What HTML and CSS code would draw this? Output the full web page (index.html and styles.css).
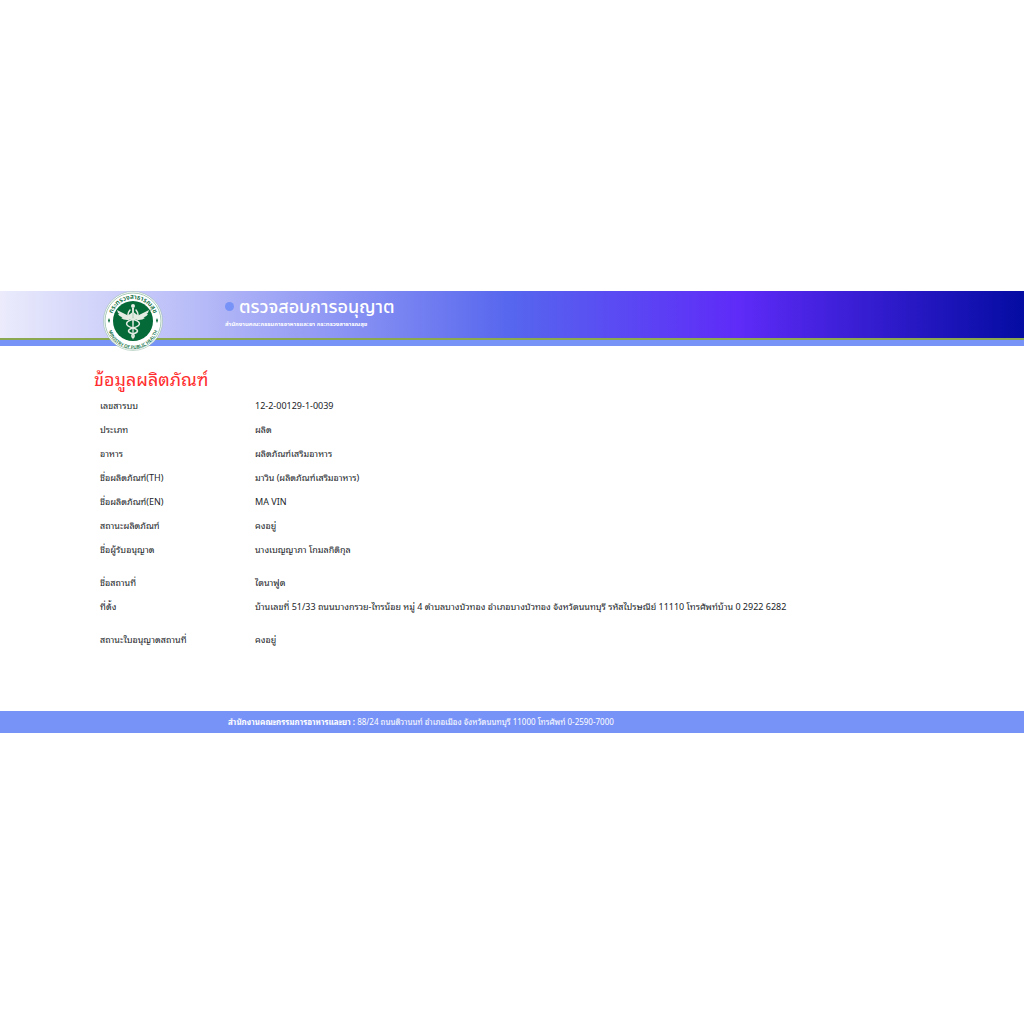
FILE: index.html
```html
<!DOCTYPE html>
<html lang="th">
<head>
    <meta charset="utf-8">
    <meta name="viewport" content="width=device-width, initial-scale=1.0">
    <title>ตรวจสอบการอนุญาต</title>
    <link rel="stylesheet" href="styles.css">
</head>
<body>
    <header class="site-header">
        <div class="banner">
            <svg class="logo" viewBox="0 0 120 120" role="img" aria-label="Ministry of Public Health">
                <defs>
                    <path id="ring-top" d="M17 66 A43.500 43.500 0 1 1 103 66" />
                    <path id="ring-bottom" d="M8.500 64 A51.500 51.500 0 0 0 111.500 64" />
                </defs>
                <circle cx="60" cy="60" r="59" fill="#fff" stroke="#8db59f" stroke-width="1" />
                <circle cx="60" cy="60" r="56" fill="none" stroke="#4f9270" stroke-width="1" />
                <circle cx="60" cy="60" r="40" fill="#046a38" />
                <text class="logo-text" font-size="13"><textPath href="#ring-top" startOffset="50%" text-anchor="middle">กระทรวงสาธารณสุข</textPath></text>
                <text class="logo-text" font-size="9"><textPath href="#ring-bottom" startOffset="50%" text-anchor="middle">MINISTRY OF PUBLIC HEALTH</textPath></text>
                <path d="M12 54l2 5-2 5-2-5zM108 54l2 5-2 5-2-5z" fill="#046a38" />
                <!-- winged staff -->
                <g fill="#e3ebe2">
                    <path d="M58 43 L50 49 L28 38 Q29 44 33 46 L30 46 Q33 52 39 53 L36 54 Q42 59 51 58 L58 55 Z" />
                    <path d="M62 43 L70 49 L92 38 Q91 44 87 46 L90 46 Q87 52 81 53 L84 54 Q78 59 69 58 L62 55 Z" />
                    <circle cx="60" cy="30" r="4" />
                    <path d="M58 34h4l-1 60-1 4-1-4z" />
                </g>
                <g fill="none" stroke="#e3ebe2" stroke-width="3" stroke-linecap="round">
                    <path d="M54 38 Q46 48 54 55 C78 60 78 69 60 74 C47 78 49 83 60 86 Q64 89 61 93" />
                    <path d="M66 38 Q74 48 66 55 C42 60 42 69 60 74 C73 78 71 83 60 86 Q56 89 59 93" />
                </g>
            </svg>
            <div class="brand">
                <h1>ตรวจสอบการอนุญาต</h1>
                <p>สำนักงานคณะกรรมการอาหารและยา กระทรวงสาธารณสุข</p>
            </div>
        </div>
    </header>

    <main class="content">
        <h2>ข้อมูลผลิตภัณฑ์</h2>
        <table class="detail">
            <tbody>
                <tr><th scope="row">เลขสารบบ</th><td>12-2-00129-1-0039</td></tr>
                <tr><th scope="row">ประเภท</th><td>ผลิต</td></tr>
                <tr><th scope="row">อาหาร</th><td>ผลิตภัณฑ์เสริมอาหาร</td></tr>
                <tr><th scope="row">ชื่อผลิตภัณฑ์(TH)</th><td>มาวิน (ผลิตภัณฑ์เสริมอาหาร)</td></tr>
                <tr><th scope="row">ชื่อผลิตภัณฑ์(EN)</th><td>MA VIN</td></tr>
                <tr><th scope="row">สถานะผลิตภัณฑ์</th><td>คงอยู่</td></tr>
                <tr class="group-end"><th scope="row">ชื่อผู้รับอนุญาต</th><td>นางเบญญาภา โกมลกิติกุล</td></tr>
                <tr><th scope="row">ชื่อสถานที่</th><td>ไดนาฟูด</td></tr>
                <tr class="group-end"><th scope="row">ที่ตั้ง</th><td>บ้านเลขที่ 51/33 ถนนบางกรวย-ไทรน้อย หมู่ 4 ตำบลบางบัวทอง อำเภอบางบัวทอง จังหวัดนนทบุรี รหัสไปรษณีย์ 11110 โทรศัพท์บ้าน 0 2922 6282</td></tr>
                <tr><th scope="row">สถานะใบอนุญาตสถานที่</th><td>คงอยู่</td></tr>
            </tbody>
        </table>
    </main>

    <footer class="site-footer">
        <strong>สำนักงานคณะกรรมการอาหารและยา :</strong> 88/24 ถนนติวานนท์ อำเภอเมือง จังหวัดนนทบุรี 11000 โทรศัพท์ 0-2590-7000
    </footer>
</body>
</html>
```
FILE: styles.css
```css
:root {
    --blue: #7893f7;
    --green: #8aa84f;
    --text-color: #212529;
}

* {
    box-sizing: border-box;
}

body {
    display: flex;
    flex-direction: column;
    justify-content: center;
    margin: 0;
    min-height: 100vh;
    background: #fff;
    color: var(--text-color);
    font-family: "Noto Sans Thai Looped", "Noto Looped Thai", "Loma", "Waree", "Garuda", "Noto Sans", "Noto Sans Thai", sans-serif;
    font-size: 9px;
}

.site-header {
    border-bottom: 6px solid var(--blue);
}

.banner {
    display: flex;
    align-items: flex-start;
    gap: 62px;
    height: 49px;
    padding-left: 103px;
    border-bottom: 2px solid var(--green);
    background: linear-gradient(to right, #ebebfc 0%, #b5b9f7 20%, #5666ee 50%, #5f2bf8 72%, #040ca2 100%);
}

.logo {
    position: relative;
    flex: none;
    width: 60px;
    height: 60px;
}

.logo-text {
    fill: #046a38;
    font-family: "Noto Sans Thai", "Noto Sans", sans-serif;
    font-weight: 600;
}

.brand {
    padding-top: 5px;
    color: #fff;
    font-family: "Noto Sans", "Noto Sans Thai", sans-serif;
}

.brand h1 {
    display: flex;
    align-items: center;
    gap: 5px;
    margin: 0;
    font-size: 18px;
    font-weight: 500;
    line-height: 20px;
}

.brand h1::before {
    content: "";
    width: 9px;
    height: 9px;
    border-radius: 50%;
    background: var(--blue);
}

.brand p {
    margin: 0;
    font-size: 6px;
    font-weight: 700;
    line-height: 16px;
}

.content {
    padding: 19px 94px 60px;
}

.content h2 {
    margin: 0 0 2px;
    color: #ff2d2d;
    font-size: 18px;
    font-weight: 400;
    line-height: 26px;
}

.detail {
    width: 100%;
    border-collapse: collapse;
}

.detail th,
.detail td {
    height: 24px;
    padding: 6px;
    font-weight: 400;
    line-height: 12px;
    text-align: left;
    vertical-align: top;
}

.detail th {
    width: 155px;
}

.detail .group-end th,
.detail .group-end td {
    height: 33px;
}

.site-footer {
    padding: 5px 228px;
    background: var(--blue);
    color: #fff;
    font-size: 8px;
    line-height: 12px;
    white-space: nowrap;
}
```
